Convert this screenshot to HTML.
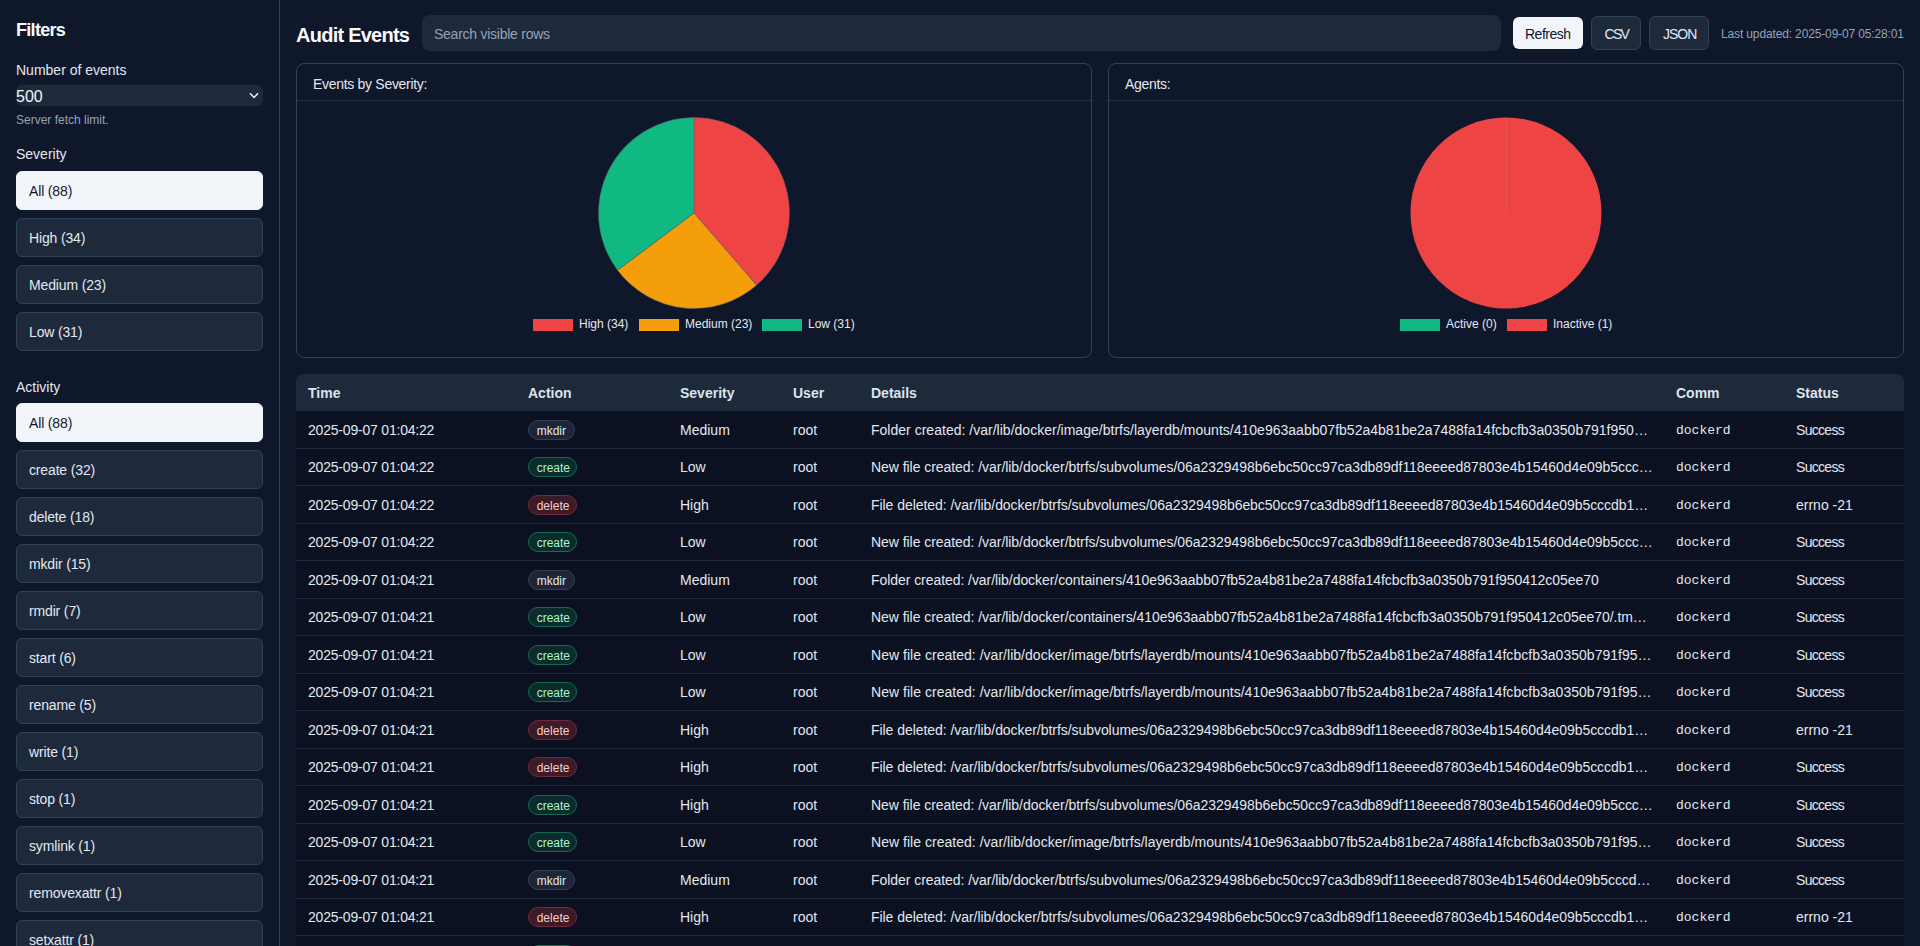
<!DOCTYPE html>
<html><head><meta charset="utf-8">
<style>
*{box-sizing:border-box;margin:0;padding:0}
html,body{width:1920px;height:946px;overflow:hidden}
body{background:#0f172a;color:#e2e8f0;font-family:"Liberation Sans",sans-serif;position:relative}
.a{position:absolute;white-space:nowrap;line-height:1}
#side{position:absolute;left:0;top:0;width:280px;height:946px;border-right:1px solid #334155;background:#0f172a;overflow:hidden}
.fb{position:absolute;left:16px;width:247px;height:39px;border:1px solid #334155;background:#1e293b;border-radius:6px;color:#e2e8f0;font-size:14px;line-height:1}
.fb span{position:absolute;left:12px;top:12.4px;letter-spacing:-0.15px}
.fb.on{background:#f1f5f9;border-color:#f1f5f9;color:#0f172a}
.btn{position:absolute;border-radius:6px;font-size:14px;line-height:1}
.btn span{position:absolute;top:0}
.card{position:absolute;top:63px;width:796px;height:295px;border:1px solid #334155;border-radius:8px;background:#0f172a}
.card .hd{position:absolute;left:0;top:0;width:100%;height:37px;border-bottom:1px solid #253247}
.card .hd span{position:absolute;left:16px;top:12.3px;font-size:14px;letter-spacing:-0.3px}
.lg{position:absolute;font-size:12px;color:#e2e8f0;line-height:1}
.lg i{position:absolute;width:40px;height:12px}
#tbl{position:absolute;left:296px;top:374px;width:1608px;height:600px;border-radius:8px 8px 0 0;overflow:hidden}
#th{position:absolute;left:0;top:0;width:100%;height:37px;background:#1e293b;font-weight:bold;font-size:14px;color:#dce3ed}
.r{position:absolute;left:0;width:100%;height:37.5px;background:#0b1120;border-bottom:1px solid #1e293b;font-size:14px}
.c{position:absolute;white-space:nowrap;line-height:1}
.r .c{top:11.7px}
.r .tm{letter-spacing:-0.2px}
.r .st{letter-spacing:-0.7px}
.r .dt{letter-spacing:-0.05px}
.r .mo{font-family:"Liberation Mono",monospace;font-size:13px;top:12.6px}
.bd{position:absolute;top:8.8px;height:20px;border-radius:10px;font-size:12px;line-height:1;border:1px solid}
.bd span{position:absolute;left:7.7px;top:3.8px}
.mk{background:#1d2537;border-color:#334155;color:#e2e8f0}
.cr{background:#0c2c2c;border-color:#136b55;color:#a7f3d0}
.dl{background:#3a1b27;border-color:#74283d;color:#fecaca}
</style></head><body>
<div id="side">
  <div class="a" style="left:16px;top:21px;font-size:18px;font-weight:bold;letter-spacing:-0.7px;color:#f8fafc">Filters</div>
  <div class="a" style="left:16px;top:63px;font-size:14px">Number of events</div>
  <div class="a" style="left:16px;top:85px;width:247px;height:21px;background:#1e293b;border-radius:6px"></div>
  <div class="a" style="left:16px;top:89px;font-size:16px;color:#f1f5f9">500</div>
  <svg class="a" style="left:249px;top:92px" width="10" height="8" viewBox="0 0 10 8"><path d="M1 1.3 L5 5.5 L9 1.3" fill="none" stroke="#f1f5f9" stroke-width="1.5"/></svg>
  <div class="a" style="left:16px;top:114px;font-size:12px;color:#94a3b8">Server fetch limit.</div>
  <div class="a" style="left:16px;top:147px;font-size:14px">Severity</div>
  <div class="fb on" style="top:171px"><span>All (88)</span></div>
  <div class="fb" style="top:218px"><span>High (34)</span></div>
  <div class="fb" style="top:265px"><span>Medium (23)</span></div>
  <div class="fb" style="top:312px"><span>Low (31)</span></div>
  <div class="a" style="left:16px;top:379.5px;font-size:14px">Activity</div>
  <div class="fb on" style="top:403px"><span>All (88)</span></div>
  <div class="fb" style="top:450px"><span>create (32)</span></div>
  <div class="fb" style="top:497px"><span>delete (18)</span></div>
  <div class="fb" style="top:544px"><span>mkdir (15)</span></div>
  <div class="fb" style="top:591px"><span>rmdir (7)</span></div>
  <div class="fb" style="top:638px"><span>start (6)</span></div>
  <div class="fb" style="top:685px"><span>rename (5)</span></div>
  <div class="fb" style="top:732px"><span>write (1)</span></div>
  <div class="fb" style="top:779px"><span>stop (1)</span></div>
  <div class="fb" style="top:826px"><span>symlink (1)</span></div>
  <div class="fb" style="top:873px"><span>removexattr (1)</span></div>
  <div class="fb" style="top:920px"><span>setxattr (1)</span></div>
</div>

<!-- header -->
<div class="a" style="left:296px;top:25px;font-size:20px;font-weight:bold;letter-spacing:-0.75px;color:#f8fafc">Audit Events</div>
<div class="a" style="left:422px;top:15px;width:1079px;height:36px;background:#1e293b;border-radius:8px"></div>
<div class="a" style="left:434px;top:27px;font-size:14px;color:#94a3b8;letter-spacing:-0.25px">Search visible rows</div>
<div class="btn" style="left:1513px;top:17px;width:70px;height:32px;background:#f1f5f9;color:#0f172a"><span style="left:12px;top:10px;letter-spacing:-0.5px">Refresh</span></div>
<div class="btn" style="left:1591px;top:16px;width:50px;height:34px;background:#1e293b;border:1px solid #334155;color:#e2e8f0"><span style="left:12.5px;top:10px;letter-spacing:-1.7px">CSV</span></div>
<div class="btn" style="left:1649px;top:16px;width:60px;height:34px;background:#1e293b;border:1px solid #334155;color:#e2e8f0"><span style="left:13px;top:10px;letter-spacing:-1px">JSON</span></div>
<div class="a" style="left:1721px;top:28px;font-size:12px;color:#94a3b8;letter-spacing:-0.14px">Last updated: 2025-09-07 05:28:01</div>

<!-- cards -->
<div class="card" style="left:296px"><div class="hd"><span>Events by Severity:</span></div></div>
<div class="card" style="left:1108px"><div class="hd"><span>Agents:</span></div></div>

<div id="tbl">
<div id="th">
<div class="c" style="left:12px;top:11.8px">Time</div>
<div class="c" style="left:232px;top:11.8px">Action</div>
<div class="c" style="left:384px;top:11.8px">Severity</div>
<div class="c" style="left:497px;top:11.8px">User</div>
<div class="c" style="left:575px;top:11.8px">Details</div>
<div class="c" style="left:1380px;top:11.8px">Comm</div>
<div class="c" style="left:1500px;top:11.8px">Status</div>
</div>
<div class="r" style="top:37.0px"><div class="c tm" style="left:12px">2025-09-07 01:04:22</div><div class="bd mk" style="left:232px;width:47px"><span>mkdir</span></div><div class="c" style="left:384px">Medium</div><div class="c" style="left:497px">root</div><div class="c dt" style="left:575px;letter-spacing:0.015px">Folder created: /var/lib/docker/image/btrfs/layerdb/mounts/410e963aabb07fb52a4b81be2a7488fa14fcbcfb3a0350b791f950…</div><div class="c mo" style="left:1380px">dockerd</div><div class="c st" style="left:1500px">Success</div></div>
<div class="r" style="top:74.5px"><div class="c tm" style="left:12px">2025-09-07 01:04:22</div><div class="bd cr" style="left:232px;width:49px"><span>create</span></div><div class="c" style="left:384px">Low</div><div class="c" style="left:497px">root</div><div class="c dt" style="left:575px;letter-spacing:-0.05px">New file created: /var/lib/docker/btrfs/subvolumes/06a2329498b6ebc50cc97ca3db89df118eeeed87803e4b15460d4e09b5ccc…</div><div class="c mo" style="left:1380px">dockerd</div><div class="c st" style="left:1500px">Success</div></div>
<div class="r" style="top:112.0px"><div class="c tm" style="left:12px">2025-09-07 01:04:22</div><div class="bd dl" style="left:232px;width:49px"><span>delete</span></div><div class="c" style="left:384px">High</div><div class="c" style="left:497px">root</div><div class="c dt" style="left:575px;letter-spacing:-0.05px">File deleted: /var/lib/docker/btrfs/subvolumes/06a2329498b6ebc50cc97ca3db89df118eeeed87803e4b15460d4e09b5cccdb1…</div><div class="c mo" style="left:1380px">dockerd</div><div class="c" style="left:1500px">errno -21</div></div>
<div class="r" style="top:149.5px"><div class="c tm" style="left:12px">2025-09-07 01:04:22</div><div class="bd cr" style="left:232px;width:49px"><span>create</span></div><div class="c" style="left:384px">Low</div><div class="c" style="left:497px">root</div><div class="c dt" style="left:575px;letter-spacing:-0.05px">New file created: /var/lib/docker/btrfs/subvolumes/06a2329498b6ebc50cc97ca3db89df118eeeed87803e4b15460d4e09b5ccc…</div><div class="c mo" style="left:1380px">dockerd</div><div class="c st" style="left:1500px">Success</div></div>
<div class="r" style="top:187.0px"><div class="c tm" style="left:12px">2025-09-07 01:04:21</div><div class="bd mk" style="left:232px;width:47px"><span>mkdir</span></div><div class="c" style="left:384px">Medium</div><div class="c" style="left:497px">root</div><div class="c dt" style="left:575px;letter-spacing:-0.06px">Folder created: /var/lib/docker/containers/410e963aabb07fb52a4b81be2a7488fa14fcbcfb3a0350b791f950412c05ee70</div><div class="c mo" style="left:1380px">dockerd</div><div class="c st" style="left:1500px">Success</div></div>
<div class="r" style="top:224.5px"><div class="c tm" style="left:12px">2025-09-07 01:04:21</div><div class="bd cr" style="left:232px;width:49px"><span>create</span></div><div class="c" style="left:384px">Low</div><div class="c" style="left:497px">root</div><div class="c dt" style="left:575px;letter-spacing:-0.05px">New file created: /var/lib/docker/containers/410e963aabb07fb52a4b81be2a7488fa14fcbcfb3a0350b791f950412c05ee70/.tm…</div><div class="c mo" style="left:1380px">dockerd</div><div class="c st" style="left:1500px">Success</div></div>
<div class="r" style="top:262.0px"><div class="c tm" style="left:12px">2025-09-07 01:04:21</div><div class="bd cr" style="left:232px;width:49px"><span>create</span></div><div class="c" style="left:384px">Low</div><div class="c" style="left:497px">root</div><div class="c dt" style="left:575px;letter-spacing:0.027px">New file created: /var/lib/docker/image/btrfs/layerdb/mounts/410e963aabb07fb52a4b81be2a7488fa14fcbcfb3a0350b791f95…</div><div class="c mo" style="left:1380px">dockerd</div><div class="c st" style="left:1500px">Success</div></div>
<div class="r" style="top:299.5px"><div class="c tm" style="left:12px">2025-09-07 01:04:21</div><div class="bd cr" style="left:232px;width:49px"><span>create</span></div><div class="c" style="left:384px">Low</div><div class="c" style="left:497px">root</div><div class="c dt" style="left:575px;letter-spacing:0.027px">New file created: /var/lib/docker/image/btrfs/layerdb/mounts/410e963aabb07fb52a4b81be2a7488fa14fcbcfb3a0350b791f95…</div><div class="c mo" style="left:1380px">dockerd</div><div class="c st" style="left:1500px">Success</div></div>
<div class="r" style="top:337.0px"><div class="c tm" style="left:12px">2025-09-07 01:04:21</div><div class="bd dl" style="left:232px;width:49px"><span>delete</span></div><div class="c" style="left:384px">High</div><div class="c" style="left:497px">root</div><div class="c dt" style="left:575px;letter-spacing:-0.05px">File deleted: /var/lib/docker/btrfs/subvolumes/06a2329498b6ebc50cc97ca3db89df118eeeed87803e4b15460d4e09b5cccdb1…</div><div class="c mo" style="left:1380px">dockerd</div><div class="c" style="left:1500px">errno -21</div></div>
<div class="r" style="top:374.5px"><div class="c tm" style="left:12px">2025-09-07 01:04:21</div><div class="bd dl" style="left:232px;width:49px"><span>delete</span></div><div class="c" style="left:384px">High</div><div class="c" style="left:497px">root</div><div class="c dt" style="left:575px;letter-spacing:-0.05px">File deleted: /var/lib/docker/btrfs/subvolumes/06a2329498b6ebc50cc97ca3db89df118eeeed87803e4b15460d4e09b5cccdb1…</div><div class="c mo" style="left:1380px">dockerd</div><div class="c st" style="left:1500px">Success</div></div>
<div class="r" style="top:412.0px"><div class="c tm" style="left:12px">2025-09-07 01:04:21</div><div class="bd cr" style="left:232px;width:49px"><span>create</span></div><div class="c" style="left:384px">High</div><div class="c" style="left:497px">root</div><div class="c dt" style="left:575px;letter-spacing:-0.05px">New file created: /var/lib/docker/btrfs/subvolumes/06a2329498b6ebc50cc97ca3db89df118eeeed87803e4b15460d4e09b5ccc…</div><div class="c mo" style="left:1380px">dockerd</div><div class="c st" style="left:1500px">Success</div></div>
<div class="r" style="top:449.5px"><div class="c tm" style="left:12px">2025-09-07 01:04:21</div><div class="bd cr" style="left:232px;width:49px"><span>create</span></div><div class="c" style="left:384px">Low</div><div class="c" style="left:497px">root</div><div class="c dt" style="left:575px;letter-spacing:0.027px">New file created: /var/lib/docker/image/btrfs/layerdb/mounts/410e963aabb07fb52a4b81be2a7488fa14fcbcfb3a0350b791f95…</div><div class="c mo" style="left:1380px">dockerd</div><div class="c st" style="left:1500px">Success</div></div>
<div class="r" style="top:487.0px"><div class="c tm" style="left:12px">2025-09-07 01:04:21</div><div class="bd mk" style="left:232px;width:47px"><span>mkdir</span></div><div class="c" style="left:384px">Medium</div><div class="c" style="left:497px">root</div><div class="c dt" style="left:575px;letter-spacing:-0.05px">Folder created: /var/lib/docker/btrfs/subvolumes/06a2329498b6ebc50cc97ca3db89df118eeeed87803e4b15460d4e09b5cccd…</div><div class="c mo" style="left:1380px">dockerd</div><div class="c st" style="left:1500px">Success</div></div>
<div class="r" style="top:524.5px"><div class="c tm" style="left:12px">2025-09-07 01:04:21</div><div class="bd dl" style="left:232px;width:49px"><span>delete</span></div><div class="c" style="left:384px">High</div><div class="c" style="left:497px">root</div><div class="c dt" style="left:575px;letter-spacing:-0.05px">File deleted: /var/lib/docker/btrfs/subvolumes/06a2329498b6ebc50cc97ca3db89df118eeeed87803e4b15460d4e09b5cccdb1…</div><div class="c mo" style="left:1380px">dockerd</div><div class="c" style="left:1500px">errno -21</div></div>
<div class="r" style="top:562.0px"><div class="c tm" style="left:12px">2025-09-07 01:04:21</div><div class="bd cr" style="left:232px;width:49px"><span>create</span></div><div class="c" style="left:384px">Low</div><div class="c" style="left:497px">root</div><div class="c dt" style="left:575px;letter-spacing:-0.05px">New file created: /var/lib/docker/image/btrfs/layerdb/mounts/410e963aabb07fb52a4b81be2a7488fa14fcbcfb3a0350b791f95…</div><div class="c mo" style="left:1380px">dockerd</div><div class="c st" style="left:1500px">Success</div></div>
</div>
<svg class="a" style="left:598px;top:117px" width="192" height="192" viewBox="0 0 192 192"><path d="M96,96 L96.00,0.50 A95.5,95.5 0 0 1 158.54,168.17 Z" fill="#ef4444" stroke="#5b5f6b" stroke-opacity="0.6" stroke-width="0.8" stroke-linejoin="round"/><path d="M96,96 L158.54,168.17 A95.5,95.5 0 0 1 19.55,153.23 Z" fill="#f59e0b" stroke="#5b5f6b" stroke-opacity="0.6" stroke-width="0.8" stroke-linejoin="round"/><path d="M96,96 L19.55,153.23 A95.5,95.5 0 0 1 96.00,0.50 Z" fill="#10b981" stroke="#5b5f6b" stroke-opacity="0.6" stroke-width="0.8" stroke-linejoin="round"/></svg>
<svg class="a" style="left:1410px;top:117px" width="192" height="192" viewBox="0 0 192 192"><circle cx="96" cy="96" r="95.5" fill="#ef4444"/><line x1="96" y1="96" x2="96" y2="0.5" stroke="#a8a0a8" stroke-opacity="0.3" stroke-width="1"/></svg>
<div class="lg"><i style="left:533px;top:319px;background:#ef4444"></i><span class="a" style="left:579px;top:318px">High (34)</span><i style="left:639px;top:319px;background:#f59e0b"></i><span class="a" style="left:685px;top:318px">Medium (23)</span><i style="left:762px;top:319px;background:#10b981"></i><span class="a" style="left:808px;top:318px">Low (31)</span></div>
<div class="lg"><i style="left:1400px;top:319px;background:#10b981"></i><span class="a" style="left:1446px;top:318px">Active (0)</span><i style="left:1507px;top:319px;background:#ef4444"></i><span class="a" style="left:1553px;top:318px">Inactive (1)</span></div>
</body></html>
